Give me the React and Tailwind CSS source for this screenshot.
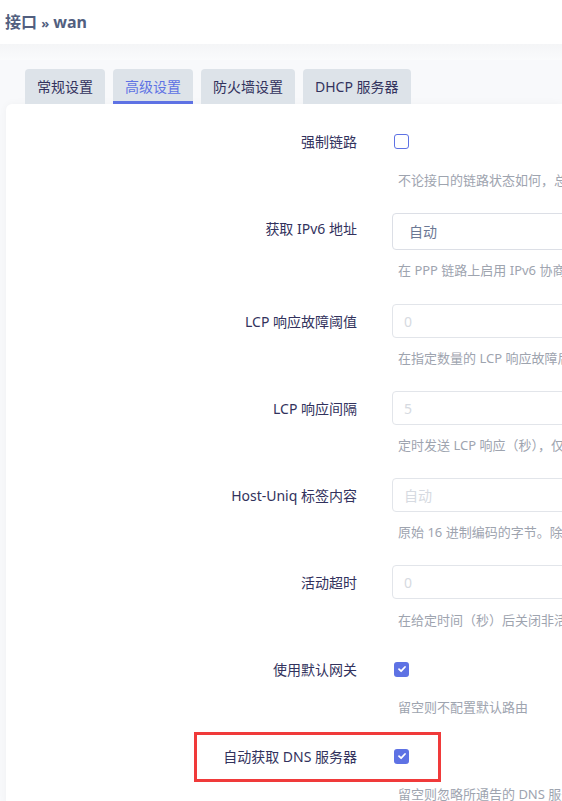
import React from "react";

const rows = [
  { label: "强制链路", type: "checkbox", checked: false, desc: "不论接口的链路状态如何，总是对接口进行配置（如果设置，则链路状态变化事件不会调用热插拔处理程序）", descTop: "mt-[12px]", mb: "mb-[21px]" },
  { label: "获取 IPv6 地址", type: "select", value: "自动", desc: "在 PPP 链路上启用 IPv6 协商", descTop: "mt-[10px]", mb: "mb-[24px]" },
  { label: "LCP 响应故障阈值", type: "input", value: "0", desc: "在指定数量的 LCP 响应故障后假定链路已断开，0 为忽略故障", descTop: "mt-[10px]", mb: "mb-[23px]" },
  { label: "LCP 响应间隔", type: "input", value: "5", desc: "定时发送 LCP 响应（秒），仅在结合了故障阈值时有效", descTop: "mt-[10px]", mb: "mb-[23px]" },
  { label: "Host-Uniq 标签内容", type: "input", value: "自动", desc: "原始 16 进制编码的字节。除非您的 ISP 要求，否则请留空", descTop: "mt-[10px]", mb: "mb-[23px]" },
  { label: "活动超时", type: "input", value: "0", desc: "在给定时间（秒）后关闭非活动链接，0 为保持连接", descTop: "mt-[11px]", mb: "mb-[22px]" },
  { label: "使用默认网关", type: "checkbox", checked: true, desc: "留空则不配置默认路由", descTop: "mt-[11px]", mb: "mb-[22px]" },
  { label: "自动获取 DNS 服务器", type: "checkbox", checked: true, desc: "留空则忽略所通告的 DNS 服务器地址", descTop: "mt-[11px]", mb: "mb-[22px]", mark: true },
];

function Check({ checked }) {
  if (!checked) {
    return <span className="block w-[15px] h-[15px] rounded-[3px] border-[1.5px] border-[#5e72e4] bg-white" />;
  }
  return (
    <span className="flex w-[15px] h-[15px] rounded-[3px] bg-[#5e72e4] items-center justify-center">
      <svg width="10" height="10" viewBox="0 0 10 10">
        <path d="M2 5.2 L4.1 7.2 L8 3" fill="none" stroke="#fff" strokeWidth="1.8" strokeLinecap="round" strokeLinejoin="round" />
      </svg>
    </span>
  );
}

function Control({ row }) {
  if (row.type === "checkbox") {
    return (
      <div className="h-[34px] flex items-center pl-[2px]">
        <Check checked={row.checked} />
      </div>
    );
  }
  if (row.type === "select") {
    return (
      <div className="h-[39px] pt-[2px]">
        <div className="h-[37px] w-[300px] border border-[#dcdfe6] rounded-[4px] flex items-center pl-[16px] text-[14px] text-[#6b7894]">
          {row.value}
        </div>
      </div>
    );
  }
  return (
    <div className="h-[34px] w-[300px] border border-[#e2e5ea] rounded-[4px] flex items-center pl-[11px] text-[14px] text-[#d6dae1]">
      {row.value}
    </div>
  );
}

export default function App() {
  return (
    <div className="min-h-screen w-[562px] overflow-hidden bg-[#f8f9fb] font-['Noto_Sans','Noto_Sans_CJK_SC',sans-serif]">
      <div className="h-[44px] bg-white flex items-center pl-[5px]">
        <h2 className="text-[16px] font-bold text-[#525f7f] leading-none">
          接口 <span className="text-[13px]">»</span> wan
        </h2>
      </div>
      <div className="h-[16px] bg-gradient-to-b from-[#f4f5f7] to-[#fafbfc]" />

      <div className="flex gap-[8px] pl-[25px] pt-[9px]">
        {["常规设置", "高级设置", "防火墙设置", "DHCP 服务器"].map((t, i) => (
          <div
            key={t}
            className={
              "h-[35px] px-[12px] rounded-t-[4px] bg-[#dde3e9] text-[14px] flex items-center whitespace-nowrap " +
              (i === 1 ? "text-[#5e72e4] border-b-[3px] border-[#5e72e4] pt-[3px]" : "text-[#32325d]")
            }
          >
            {t}
          </div>
        ))}
      </div>

      <div className="ml-[6px] bg-white rounded-tl-[6px] shadow-[0_0_8px_rgba(0,0,0,0.04)] pt-[20px] min-h-[697px]">
        {rows.map((row) => (
          <div key={row.label} className={"relative " + row.mb}>
            {row.mark && (
              <div className="absolute left-[188px] top-[-7px] w-[247px] h-[50px] border-[3px] border-[#f03a3a]" />
            )}
            <div className="flex">
              <div className="w-[351px] shrink-0 h-[34px] flex items-center justify-end text-[14px] text-[#32325d] whitespace-nowrap">
                {row.label}
              </div>
              <div className="ml-[35px] shrink-0">
                <Control row={row} />
              </div>
            </div>
            <div className={"pl-[392px] h-[20px] text-[13px] leading-[20px] text-[#9ea4af] whitespace-nowrap " + row.descTop}>
              {row.desc}
            </div>
          </div>
        ))}
      </div>
    </div>
  );
}
